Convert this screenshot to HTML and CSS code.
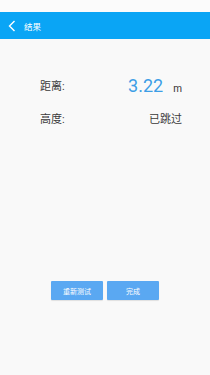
FILE: index.html
```html
<!DOCTYPE html>
<html lang="zh">
<head>
    <meta charset="UTF-8">
    <meta name="viewport" content="width=device-width, initial-scale=1.0">
    <title>结果</title>
    <link rel="stylesheet" href="styles.css">
</head>
<body>
    <div class="status-bar"></div>
    <div class="title-bar">
        <svg class="back" width="8" height="12" viewBox="0 0 8 12">
            <path d="M6.5 1 L1.5 6 L6.5 11" fill="none" stroke="#fff" stroke-width="1.4"/>
        </svg>
        <span class="title">结果</span>
    </div>
    <div class="content">
        <div class="row">
            <span class="label">距离:</span>
            <span class="value"><span class="number">3.22</span><span class="unit">m</span></span>
        </div>
        <div class="row">
            <span class="label">高度:</span>
            <span class="value skipped">已跳过</span>
        </div>
    </div>
    <div class="buttons">
        <button class="btn">重新测试</button>
        <button class="btn">完成</button>
    </div>
</body>
</html>
```

FILE: styles.css
```css
body {
    margin: 0;
    padding: 0;
    width: 210px;
    height: 375px;
    background: #f9f9f9;
    font-family: Roboto, "Noto Sans CJK SC", sans-serif;
    color: #333;
    overflow: hidden;
}

.status-bar {
    height: 12px;
    background: #fbfbfb;
}

.title-bar {
    height: 27px;
    background: #0aa5f5;
    display: flex;
    align-items: center;
    padding-left: 8px;
    gap: 8px;
}

.title {
    color: #fff;
    font-size: 8.5px;
}

.content {
    padding: 36px 28px 0 40px;
}

.row {
    display: flex;
    justify-content: space-between;
    align-items: center;
    height: 20px;
    margin-bottom: 13px;
}

.label {
    font-size: 11px;
    color: #3a3a3a;
}

.value {
    display: flex;
    align-items: baseline;
}

.number {
    font-size: 18px;
    color: #3d9ee6;
    margin-right: 10px;
}

.unit {
    font-size: 10px;
    color: #333;
}

.skipped {
    font-size: 11px;
    color: #3a3a3a;
}

.buttons {
    display: flex;
    justify-content: center;
    gap: 4px;
    margin-top: 153px;
}

.btn {
    width: 52px;
    height: 19px;
    border: none;
    border-radius: 1px;
    background: #5aa8f2;
    color: #fff;
    font-size: 7px;
    font-family: "Noto Sans CJK SC", sans-serif;
    padding: 0;
    box-shadow: 0 1px 1px rgba(0, 0, 0, 0.1);
}
```
